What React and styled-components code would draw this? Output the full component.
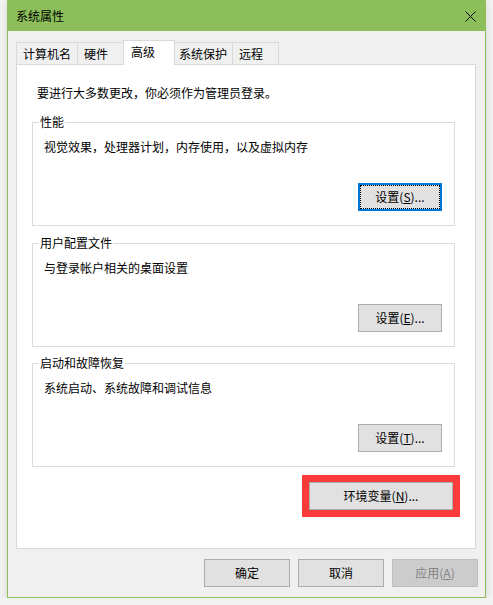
import React from "react";
import styled, { createGlobalStyle } from "styled-components";

const GlobalStyle = createGlobalStyle`
  html, body {
    margin: 0;
    padding: 0;
    background: #f2f2f2;
  }
  body {
    font-family: "Noto Sans CJK SC", "Microsoft YaHei", sans-serif;
    font-size: 12px;
    color: #000;
  }
`;

const Window = styled.div`
  box-sizing: border-box;
  width: 479px;
  height: 598px;
  margin-left: 7px;
  border: 1px solid #8cbe5c;
  background: #f0f0f0;
  display: flex;
  flex-direction: column;
  box-shadow: 0 2px 8px rgba(0, 0, 0, 0.12);
`;

const TitleBar = styled.div`
  height: 30px;
  flex-shrink: 0;
  background: #8cbf5a;
  display: flex;
  align-items: center;
  justify-content: space-between;
  padding: 0 9px 0 8px;
  line-height: 16px;
`;

const Body = styled.div`
  flex: 1;
  display: flex;
  flex-direction: column;
  padding: 9px 7px 10px 8px;
`;

const TabRow = styled.div`
  display: flex;
  align-items: flex-end;
  height: 24px;
`;

const Tab = styled.div`
  position: relative;
  box-sizing: border-box;
  width: ${(p) => p.$w}px;
  height: ${(p) => (p.$active ? 25 : 22)}px;
  margin-left: ${(p) => p.$ml || 0}px;
  margin-bottom: ${(p) => (p.$active ? -1 : 0)}px;
  z-index: ${(p) => (p.$active ? 2 : 1)};
  border: 1px solid #d9d9d9;
  border-bottom: none;
  background: ${(p) => (p.$active ? "#fff" : "#f0f0f0")};
  padding: 3px 0 0 ${(p) => (p.$active ? 7 : 6)}px;
  line-height: 16px;
  white-space: nowrap;
`;

const Panel = styled.div`
  box-sizing: border-box;
  height: 485px;
  margin-right: 2px;
  border: 1px solid #d9d9d9;
  background: #fff;
  display: flex;
  flex-direction: column;
  padding-top: 20px;
`;

const Intro = styled.div`
  margin-left: 20px;
  line-height: 16px;
`;

const Group = styled.div`
  position: relative;
  box-sizing: border-box;
  height: 104px;
  margin: ${(p) => p.$mt}px 20px 0 15px;
  border: 1px solid #dcdcdc;
  padding: 16px 12px 14px 11px;
  display: flex;
  flex-direction: column;
`;

const GroupLabel = styled.span`
  position: absolute;
  top: -9px;
  left: 6px;
  padding: 0 1px;
  background: #fff;
  line-height: 16px;
`;

const GroupText = styled.div`
  line-height: 16px;
`;

const ButtonRow = styled.div`
  margin-top: auto;
  display: flex;
  justify-content: flex-end;
`;

const Button = styled.button`
  box-sizing: border-box;
  width: ${(p) => p.$w || 84}px;
  height: 28px;
  padding: 0;
  margin: 0;
  font-family: inherit;
  font-size: 12px;
  line-height: 16px;
  color: ${(p) => (p.disabled ? "#838383" : "#000")};
  background: ${(p) => (p.disabled ? "#cccccc" : "#e1e1e1")};
  border: ${(p) =>
    p.$focused ? "2px solid #0078d7" : p.disabled ? "1px solid #bfbfbf" : "1px solid #adadad"};
  outline: ${(p) => (p.$focused ? "1px dotted #000" : "none")};
  outline-offset: -3px;
  display: flex;
  align-items: center;
  justify-content: center;
  u {
    text-decoration: underline;
    text-underline-offset: 1px;
  }
`;

const RedFrame = styled.div`
  align-self: flex-end;
  margin: 8px 15px 0 0;
  border: 7px solid #f93b3b;
  display: flex;
`;

const Footer = styled.div`
  margin-top: 10px;
  display: flex;
  justify-content: flex-end;
  gap: 8px;
`;

const CloseIcon = () => (
  <svg width="11" height="11" viewBox="0 0 11 11">
    <path d="M0.5 0.5 L10.5 10.5 M10.5 0.5 L0.5 10.5" stroke="#000" strokeWidth="1" fill="none" />
  </svg>
);

const tabs = [
  { label: "计算机名", w: 62, ml: 0 },
  { label: "硬件", w: 49, ml: -1 },
  { label: "高级", w: 52, ml: -3, active: true },
  { label: "系统保护", w: 61, ml: -3 },
  { label: "远程", w: 47, ml: -1 },
];

const groups = [
  { title: "性能", text: "视觉效果，处理器计划，内存使用，以及虚拟内存", key: "S", mt: 21, focused: true },
  { title: "用户配置文件", text: "与登录帐户相关的桌面设置", key: "E", mt: 17 },
  { title: "启动和故障恢复", text: "系统启动、系统故障和调试信息", key: "T", mt: 16 },
];

export default function App() {
  return (
    <>
      <GlobalStyle />
      <Window>
        <TitleBar>
          <span>系统属性</span>
          <CloseIcon />
        </TitleBar>
        <Body>
          <TabRow>
            {tabs.map((t) => (
              <Tab key={t.label} $w={t.w} $ml={t.ml} $active={t.active}>
                {t.label}
              </Tab>
            ))}
          </TabRow>
          <Panel>
            <Intro>要进行大多数更改，你必须作为管理员登录。</Intro>
            {groups.map((g) => (
              <Group key={g.title} $mt={g.mt}>
                <GroupLabel>{g.title}</GroupLabel>
                <GroupText>{g.text}</GroupText>
                <ButtonRow>
                  <Button $focused={g.focused}>
                    设置(<u>{g.key}</u>)...
                  </Button>
                </ButtonRow>
              </Group>
            ))}
            <RedFrame>
              <Button $w={144}>
                环境变量(<u>N</u>)...
              </Button>
            </RedFrame>
          </Panel>
          <Footer>
            <Button $w={86}>确定</Button>
            <Button $w={86}>取消</Button>
            <Button $w={86} disabled>
              应用(<u>A</u>)
            </Button>
          </Footer>
        </Body>
      </Window>
    </>
  );
}
